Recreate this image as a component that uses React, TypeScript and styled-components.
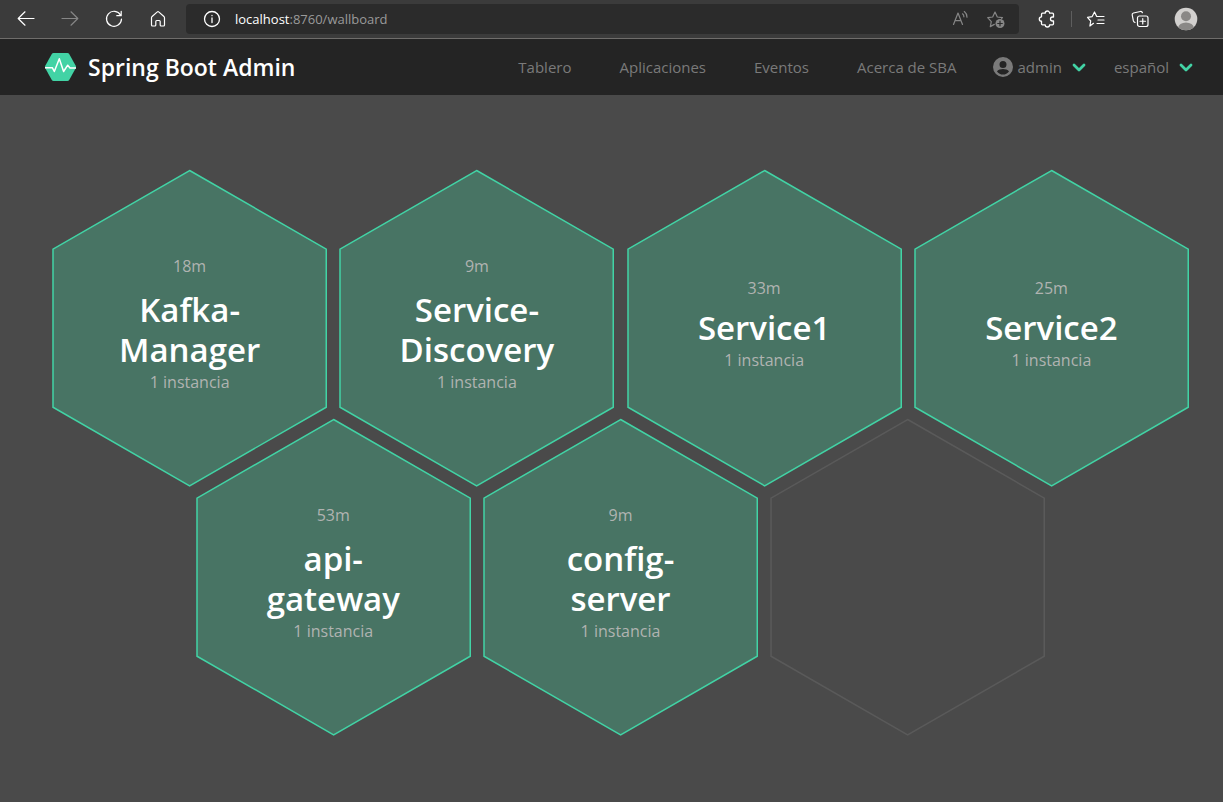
import React from "react";
import styled, { createGlobalStyle } from "styled-components";

const GlobalStyle = createGlobalStyle`
  *, *::before, *::after { box-sizing: border-box; }
  body {
    margin: 0;
    background: #4a4a4a;
    font-family: "Open Sans", "Noto Sans", sans-serif;
  }
`;

const Shell = styled.div`
  display: flex;
  flex-direction: column;
  min-height: 100vh;
`;

/* Browser toolbar */

const Toolbar = styled.div`
  display: flex;
  align-items: center;
  gap: 12px;
  height: 39px;
  padding: 0 19px 0 10px;
  background: #3b3b3b;
  border-bottom: 1px solid #6f6d6b;
`;

const ToolButton = styled.button<{ $dim?: boolean; $wide?: boolean }>`
  display: flex;
  flex: none;
  align-items: center;
  justify-content: center;
  width: ${(p) => (p.$wide ? "36px" : "32px")};
  height: 30px;
  padding: 0;
  border: 0;
  background: none;
  color: ${(p) => (p.$dim ? "#868686" : "#ffffff")};
`;

const Address = styled.div`
  display: flex;
  flex: 1;
  align-items: center;
  min-width: 0;
  height: 30px;
  padding: 0 7px 0 10px;
  border-radius: 4px;
  background: #2b2b2b;
  font-size: 13px;
  line-height: 20px;
`;

const Host = styled.label`
  padding-left: 7px;
  color: #ffffff;
`;

const PathInput = styled.input`
  flex: 1;
  min-width: 0;
  padding: 0;
  border: 0;
  outline: 0;
  background: none;
  color: #9a9a9a;
  font: inherit;
`;

const AddressActions = styled.div`
  display: flex;
  gap: 4px;
`;

const ToolGroup = styled.div`
  display: flex;
  align-items: center;
  gap: 8px;
`;

const Divider = styled.span`
  width: 1px;
  height: 16px;
  background: #5e5e5e;
`;

/* Application header */

const Header = styled.header`
  display: flex;
  align-items: center;
  justify-content: space-between;
  min-height: 56px;
  padding: 0 30px 0 45px;
  background: #242424;
`;

const Brand = styled.a`
  display: flex;
  align-items: center;
  gap: 12px;
  color: #ffffff;
  font-size: 23px;
  font-weight: 600;
  line-height: 32px;
  text-decoration: none;
  white-space: nowrap;
`;

const Nav = styled.nav`
  display: flex;
  align-items: center;
  gap: 48px;
  font-size: 15px;
  line-height: 24px;
  white-space: nowrap;
`;

const NavLink = styled.a`
  color: #7a7a7a;
  text-decoration: none;
`;

const Menus = styled.div`
  display: flex;
  gap: 28px;
  margin-left: -12px;
`;

const MenuButton = styled.button`
  display: flex;
  align-items: center;
  gap: 10px;
  padding: 0;
  border: 0;
  background: none;
  color: #7a7a7a;
  font: inherit;
`;

const MenuLabel = styled.span`
  display: flex;
  align-items: center;
  gap: 5px;
`;

/* Wallboard */

const Board = styled.main`
  display: grid;
  grid-template-columns: repeat(8, 1fr);
  align-content: start;
  padding: 74px 28px 66px 46px;
`;

const Cell = styled.article<{ $column: number; $nested?: boolean }>`
  display: grid;
  grid-column: ${(p) => p.$column} / span 2;
  margin-top: ${(p) => (p.$nested ? "-24%" : "0")};
  padding: 0 6px;
`;

const HexShape = styled.svg<{ $empty?: boolean }>`
  grid-area: 1 / 1;
  width: 100%;
  height: auto;
  fill: ${(p) => (p.$empty ? "none" : "#487464")};
  stroke: ${(p) => (p.$empty ? "#5a5a5a" : "#42d3a5")};
`;

const HexBody = styled.div`
  display: flex;
  grid-area: 1 / 1;
  flex-direction: column;
  align-items: center;
  justify-content: center;
  padding-bottom: 8px;
  color: #b0b3b1;
  font-size: 16px;
  line-height: 24px;
  text-align: center;
`;

const Name = styled.h1<{ $long: boolean }>`
  margin: ${(p) => (p.$long ? "12px" : "8px")} 0 0;
  color: #ffffff;
  font-size: 33px;
  font-weight: 600;
  line-height: 40px;
`;

const icon = {
  width: 20,
  height: 20,
  viewBox: "0 0 20 20",
  fill: "none",
  stroke: "currentColor",
  strokeWidth: 1.2,
  strokeLinecap: "round" as const,
  strokeLinejoin: "round" as const,
  "aria-hidden": true,
};

const BackIcon = () => (
  <svg {...icon}><path d="M18 9.500H2.200M9 2.800 2.200 9.500 9 16.200" /></svg>
);
const ForwardIcon = () => (
  <svg {...icon}><path d="M2 9.500h15.800M11 2.800l6.800 6.700L11 16.200" /></svg>
);
const ReloadIcon = () => (
  <svg {...icon}><path d="M16.600 6.200A7.500 7.500 0 1 0 17.500 10M17.200 2.300v4.400h-4.400" /></svg>
);
const HomeIcon = () => (
  <svg {...icon}>
    <path d="M3.500 8.700c0-.5.2-.9.6-1.200l5.200-4.600a1 1 0 0 1 1.400 0l5.200 4.600c.4.300.6.700.6 1.200v7.300c0 .6-.4 1-1 1h-2.300c-.6 0-1-.4-1-1v-3.500c0-.6-.4-1-1-1H8.800c-.6 0-1 .4-1 1V16c0 .6-.4 1-1 1H4.500c-.6 0-1-.4-1-1z" />
  </svg>
);
const InfoIcon = () => (
  <svg {...icon} strokeWidth={1.3}>
    <circle cx="10" cy="10" r="7.500" />
    <path d="M10 9v4.500M10 6.500v.2" />
  </svg>
);
const ReadAloudIcon = () => (
  <svg {...icon}>
    <path d="M3.500 15.500 8 4l4.500 11.500M5.100 11.700h5.900M12.500 4.800c1 .8 1.400 1.700 1.400 3M14.300 2.600c1.700 1.300 2.700 3.200 2.700 5.600" />
  </svg>
);
const AddFavoriteIcon = () => (
  <svg {...icon}>
    <path d="M8.300 15.400l-4 2.200 1-5L1.700 8.600l5-.6L9 3l2.300 5 5.200.6-1 1" />
    <circle cx="14" cy="14.500" r="4.500" fill="currentColor" stroke="none" />
    <path d="M14 12.200v4.600M11.700 14.500h4.600" stroke="#2b2b2b" />
  </svg>
);
const PuzzleIcon = () => (
  <svg {...icon} strokeWidth={1.3}>
    <path d="M5.500 4.200H8.200a2.200 2.200 0 0 1 4.400 0H15.500c.6 0 1 .4 1 1V8H15.500a2 2 0 0 0 0 4h1v2.800c0 .6-.4 1-1 1h-2.900a2.200 2.200 0 0 1-4.400 0H5.500c-.6 0-1-.4-1-1V12.200a2.200 2.200 0 0 1 0-4.400V5.200c0-.6.4-1 1-1z" />
  </svg>
);
const FavoritesIcon = () => (
  <svg {...icon}>
    <path d="M7.500 14.300l-3.600 2.700.8-5L1.500 8.400l4.700-.8L8.500 3l2.200 4.500h7.300M12 11h6M11 14.500h7" />
  </svg>
);
const CollectionsIcon = () => (
  <svg {...icon}>
    <path d="M5 13.500c-1-.3-1.400-.8-1.600-1.600L2.200 6c-.2-1 .4-1.800 1.300-2l6.800-1.500c1-.2 1.800.3 2.100 1.200" />
    <rect x="7.500" y="7" width="10.500" height="10.500" rx="2" />
    <path d="M12.750 9.500v5.500M10 12.250h5.500" />
  </svg>
);
const AvatarIcon = () => (
  <svg width="24" height="24" viewBox="0 0 24 24" aria-hidden="true">
    <clipPath id="avatar"><circle cx="12" cy="12" r="11.300" /></clipPath>
    <circle cx="12" cy="12" r="11.300" fill="#d2d0ce" />
    <g clipPath="url(#avatar)" fill="#8a8886">
      <circle cx="12" cy="9.300" r="5" />
      <ellipse cx="12" cy="20.800" rx="7.800" ry="5.300" />
    </g>
  </svg>
);
const LogoIcon = () => (
  <svg width="31" height="28" viewBox="0 0 31 28" aria-hidden="true">
    <path d="M8.500 0h14c.8 0 1.300.3 1.700 1L31 13.200v1.600L24.200 27c-.4.700-.9 1-1.700 1h-14c-.8 0-1.300-.3-1.700-1L0 14.800v-1.600L6.800 1c.4-.7.900-1 1.700-1z" fill="#42d3a5" />
    <path d="M0 14.700h7.300L9.300 18.500 14.300 5.800l4.300 12.700 4.100-6.300 2.300 2.700h6" fill="none" stroke="#fff" strokeWidth="1.500" strokeLinejoin="round" />
  </svg>
);
const UserIcon = () => (
  <svg width="20" height="20" viewBox="0 0 20 20" aria-hidden="true">
    <path fillRule="evenodd" fill="#7a7a7a" d="M10 0a10 10 0 1 0 0 20 10 10 0 0 0 0-20zm0 3.900a3.500 3.500 0 1 1 0 7 3.500 3.500 0 0 1 0-7zm0 13.700c-2.400 0-4.600-1.200-6-3.200.9-1.500 4-2.300 6-2.300s5.100.8 6 2.300c-1.400 2-3.600 3.200-6 3.200z" />
  </svg>
);
const ChevronIcon = () => (
  <svg width="14" height="10" viewBox="0 0 14 10" fill="none" stroke="#42d3a5" strokeWidth="2.800" strokeLinecap="round" strokeLinejoin="round" aria-hidden="true">
    <path d="M2 3l5 5 5-5" />
  </svg>
);

type Application = { column: number; nested?: boolean; uptime: string; name: string[] };

const applications: Application[] = [
  { column: 1, uptime: "18m", name: ["Kafka-", "Manager"] },
  { column: 3, uptime: "9m", name: ["Service-", "Discovery"] },
  { column: 5, uptime: "33m", name: ["Service1"] },
  { column: 7, uptime: "25m", name: ["Service2"] },
  { column: 2, nested: true, uptime: "53m", name: ["api-", "gateway"] },
  { column: 4, nested: true, uptime: "9m", name: ["config-", "server"] },
];

const Hexagon = ({ empty }: { empty?: boolean }) => (
  <HexShape viewBox="0 0 275 318" $empty={empty} aria-hidden="true">
    <path d="M137.500 1.500 274 80v158L137.500 316.500 1 238V80z" strokeWidth="1.500" />
  </HexShape>
);

export default function App() {
  return (
    <Shell>
      <GlobalStyle />
      <Toolbar>
        <ToolButton aria-label="Atrás"><BackIcon /></ToolButton>
        <ToolButton aria-label="Adelante" $dim><ForwardIcon /></ToolButton>
        <ToolButton aria-label="Actualizar"><ReloadIcon /></ToolButton>
        <ToolButton aria-label="Inicio"><HomeIcon /></ToolButton>
        <Address>
          <ToolButton aria-label="Información del sitio"><InfoIcon /></ToolButton>
          <Host htmlFor="path">localhost</Host>
          <PathInput id="path" defaultValue=":8760/wallboard" />
          <AddressActions>
            <ToolButton aria-label="Leer en voz alta" $dim><ReadAloudIcon /></ToolButton>
            <ToolButton aria-label="Agregar a favoritos" $dim><AddFavoriteIcon /></ToolButton>
          </AddressActions>
        </Address>
        <ToolGroup>
          <ToolButton aria-label="Extensiones"><PuzzleIcon /></ToolButton>
          <Divider />
          <ToolButton aria-label="Favoritos"><FavoritesIcon /></ToolButton>
        </ToolGroup>
        <ToolButton aria-label="Colecciones"><CollectionsIcon /></ToolButton>
        <ToolButton aria-label="Perfil" $wide><AvatarIcon /></ToolButton>
      </Toolbar>

      <Header>
        <Brand href="#"><LogoIcon />Spring Boot Admin</Brand>
        <Nav>
          <NavLink href="#wallboard">Tablero</NavLink>
          <NavLink href="#applications">Aplicaciones</NavLink>
          <NavLink href="#journal">Eventos</NavLink>
          <NavLink href="#about">Acerca de SBA</NavLink>
          <Menus>
            <MenuButton>
              <MenuLabel><UserIcon />admin</MenuLabel>
              <ChevronIcon />
            </MenuButton>
            <MenuButton>
              español
              <ChevronIcon />
            </MenuButton>
          </Menus>
        </Nav>
      </Header>

      <Board>
        {applications.map((app) => (
          <Cell key={app.name.join("")} $column={app.column} $nested={app.nested}>
            <Hexagon />
            <HexBody>
              <span>{app.uptime}</span>
              <Name $long={app.name.length > 1}>
                {app.name.map((part, i) => (
                  <React.Fragment key={part}>
                    {i > 0 && <br />}
                    {part}
                  </React.Fragment>
                ))}
              </Name>
              <span>1 instancia</span>
            </HexBody>
          </Cell>
        ))}
        <Cell $column={6} $nested>
          <Hexagon empty />
        </Cell>
      </Board>
    </Shell>
  );
}
